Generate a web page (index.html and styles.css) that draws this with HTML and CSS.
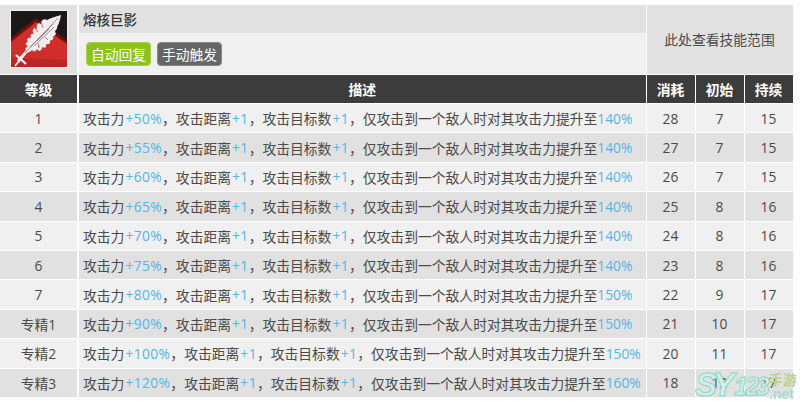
FILE: index.html
```html
<!DOCTYPE html>
<html lang="zh">
<head>
<meta charset="utf-8">
<title>熔核巨影</title>
<link rel="stylesheet" href="styles.css">
</head>
<body>
<div class="skill">
  <div class="c icon-cell">
    <svg class="icon" viewBox="0 0 58 58" width="58" height="58">
      <rect x="0.5" y="0.5" width="57" height="57" fill="#1c1818" stroke="#f0f0f0"/>
      <path d="M1 28 L26 8 L57 30 L57 40 L1 40 Z" fill="#6d1010"/>
      <path d="M1 32 L26 12 L57 34 L57 57 L1 57 Z" fill="#cf2e2a"/>
      <path d="M1 48 L1 57 L57 57 L57 50 Z" fill="#bb2523"/>
      <path d="M9 53 L7 50 L16 40 C14 39 17 37 18 36 C15 35 15 32 18 32 C16 29 18 27 21 28 C20 25 21 23 24 24 C21 20 24 17 27 19 C26 15 28 12 31 14 C31 10 34 8 37 10 C40 8 45 7 51 5 C50 10 49 14 47 17 C48 19 45 20 45 22 C47 24 45 26 43 26 C44 28 43 31 40 30 C41 33 39 35 36 34 C37 37 35 39 32 37 C32 41 29 42 27 39 C26 42 23 42 22 40 C20 42 18 42 17 43 Z" fill="#f3eded"/>
      <path d="M15 43 L48 8 M20 37 L43 14 M24 36 L44 17 M27 31 L39 19" stroke="#8b7878" stroke-width="0.8" fill="none"/>
      <path d="M24 17 L28 22 M31 12 L33 18 M38 30 L35 27 M29 38 L28 33" stroke="#c96b66" stroke-width="1" fill="none"/>
      <path d="M6 45 L16 54" stroke="#f5f0f0" stroke-width="2.2" fill="none"/>
      <path d="M9 51 L5 56" stroke="#f5f0f0" stroke-width="1.8" fill="none"/>
    </svg>
  </div>
  <div class="head-stack">
    <div class="name">熔核巨影</div>
    <div class="tags"><span class="tag green">自动回复</span><span class="tag gray">手动触发</span></div>
  </div>
  <div class="c range"><span class="range-label">此处查看技能范围</span></div>

  <div class="c th">等级</div><div class="c th">描述</div><div class="c th">消耗</div><div class="c th">初始</div><div class="c th">持续</div>

  <div class="c a">1</div><div class="c a desc">攻击力<b>+50%</b>，攻击距离<b>+1</b>，攻击目标数<b>+1</b>，仅攻击到一个敌人时对其攻击力提升至<b>140%</b></div><div class="c a">28</div><div class="c a">7</div><div class="c a">15</div>
  <div class="c z">2</div><div class="c z desc">攻击力<b>+55%</b>，攻击距离<b>+1</b>，攻击目标数<b>+1</b>，仅攻击到一个敌人时对其攻击力提升至<b>140%</b></div><div class="c z">27</div><div class="c z">7</div><div class="c z">15</div>
  <div class="c a">3</div><div class="c a desc">攻击力<b>+60%</b>，攻击距离<b>+1</b>，攻击目标数<b>+1</b>，仅攻击到一个敌人时对其攻击力提升至<b>140%</b></div><div class="c a">26</div><div class="c a">7</div><div class="c a">15</div>
  <div class="c z">4</div><div class="c z desc">攻击力<b>+65%</b>，攻击距离<b>+1</b>，攻击目标数<b>+1</b>，仅攻击到一个敌人时对其攻击力提升至<b>140%</b></div><div class="c z">25</div><div class="c z">8</div><div class="c z">16</div>
  <div class="c a">5</div><div class="c a desc">攻击力<b>+70%</b>，攻击距离<b>+1</b>，攻击目标数<b>+1</b>，仅攻击到一个敌人时对其攻击力提升至<b>140%</b></div><div class="c a">24</div><div class="c a">8</div><div class="c a">16</div>
  <div class="c z">6</div><div class="c z desc">攻击力<b>+75%</b>，攻击距离<b>+1</b>，攻击目标数<b>+1</b>，仅攻击到一个敌人时对其攻击力提升至<b>140%</b></div><div class="c z">23</div><div class="c z">8</div><div class="c z">16</div>
  <div class="c a">7</div><div class="c a desc">攻击力<b>+80%</b>，攻击距离<b>+1</b>，攻击目标数<b>+1</b>，仅攻击到一个敌人时对其攻击力提升至<b>150%</b></div><div class="c a">22</div><div class="c a">9</div><div class="c a">17</div>
  <div class="c z">专精1</div><div class="c z desc">攻击力<b>+90%</b>，攻击距离<b>+1</b>，攻击目标数<b>+1</b>，仅攻击到一个敌人时对其攻击力提升至<b>150%</b></div><div class="c z">21</div><div class="c z">10</div><div class="c z">17</div>
  <div class="c a">专精2</div><div class="c a desc">攻击力<b>+100%</b>，攻击距离<b>+1</b>，攻击目标数<b>+1</b>，仅攻击到一个敌人时对其攻击力提升至<b>150%</b></div><div class="c a">20</div><div class="c a">11</div><div class="c a">17</div>
  <div class="c z">专精3</div><div class="c z desc">攻击力<b>+120%</b>，攻击距离<b>+1</b>，攻击目标数<b>+1</b>，仅攻击到一个敌人时对其攻击力提升至<b>160%</b></div><div class="c z">18</div><div class="c z">12</div><div class="c z">17</div>
</div>
<div class="mark"><span class="sy">SY</span><span class="num">123</span><span class="side"><span class="you">手游</span><span class="net">.net</span></span></div>
</body>
</html>
```
FILE: styles.css
```css
html, body { margin: 0; padding: 0; }
body {
  width: 800px;
  height: 408px;
  background: #fff;
  overflow: hidden;
  position: relative;
  font-family: "Open Sans", "Noto Sans CJK SC", sans-serif;
  font-size: 13.8px;
  color: #4a4a4a;
}
.skill {
  display: grid;
  grid-template-columns: 77px 567.5px 48px 48px 48px;
  grid-template-rows: 69px 28px repeat(10, 28.4px);
  column-gap: 1px;
  row-gap: 1px;
  width: 793px;
  margin-top: 5px;
}
.c {
  display: flex;
  align-items: center;
  justify-content: center;
}
.icon-cell { background: #e1e1e1; }
.icon { display: block; margin-top: -1px; }
.head-stack {
  display: flex;
  flex-direction: column;
  margin-left: 1px;
  background: #f0f0f0;
}
.name {
  height: 28px;
  flex: none;
  background: #e1e1e1;
  display: flex;
  align-items: center;
  padding-left: 4px;
  font-size: 13.5px;
  color: #333;
  font-weight: 500;
}
.tags {
  display: flex;
  gap: 6px;
  padding: 9px 0 0 7px;
}
.tag {
  width: 65px;
  height: 24px;
  box-sizing: border-box;
  border-radius: 4px;
  color: #fff;
  display: flex;
  align-items: center;
  justify-content: center;
  font-size: 13.8px;
}
.green { background: #8cc21a; border: 1px solid #a5d24e; }
.gray { background: #666; border: 1px solid #888; }
.range {
  grid-column: 3 / 6;
  background: #e1e1e1;
  color: #4a4a4a;
}
.range-label { margin-bottom: 2px; }
.th {
  background: #3c3c3c;
  color: #fff;
  font-weight: 700;
}
.a { background: #f0f0f0; }
.z { background: #e1e1e1; }
.desc {
  justify-content: flex-start;
  padding-left: 4px;
  white-space: nowrap;
}
.skill > .desc, .skill > .th:nth-child(5) { margin-left: 1px; }
.desc b {
  font-weight: 400;
  color: #55b4e8;
  padding-left: 1px;
  letter-spacing: 0.4px;
}
.desc b:last-child {
  padding-left: 0;
  letter-spacing: 0;
}
.mark {
  position: absolute;
  left: 695px;
  top: 366px;
  display: flex;
  align-items: flex-end;
  height: 36px;
  font-family: "Liberation Sans", sans-serif;
  font-style: italic;
  font-weight: 700;
}
.sy, .num {
  color: #d3efe9;
  -webkit-text-stroke: 1px #92d5c6;
}
.sy {
  font-size: 33px;
  line-height: 34px;
  letter-spacing: -4.5px;
}
.num {
  font-size: 25px;
  line-height: 32px;
  letter-spacing: -3px;
  margin-left: 4px;
}
.side {
  display: flex;
  flex-direction: column;
  line-height: 1;
  width: 28px;
  margin-left: 2px;
  padding-bottom: 1px;
  font-style: normal;
  font-weight: 400;
}
.you {
  font-family: "Noto Sans CJK SC", sans-serif;
  font-size: 14px;
  font-weight: 700;
  line-height: 15px;
  color: #bed08a;
}
.net {
  font-size: 14px;
  font-weight: 700;
  color: #a8dccf;
}
```
